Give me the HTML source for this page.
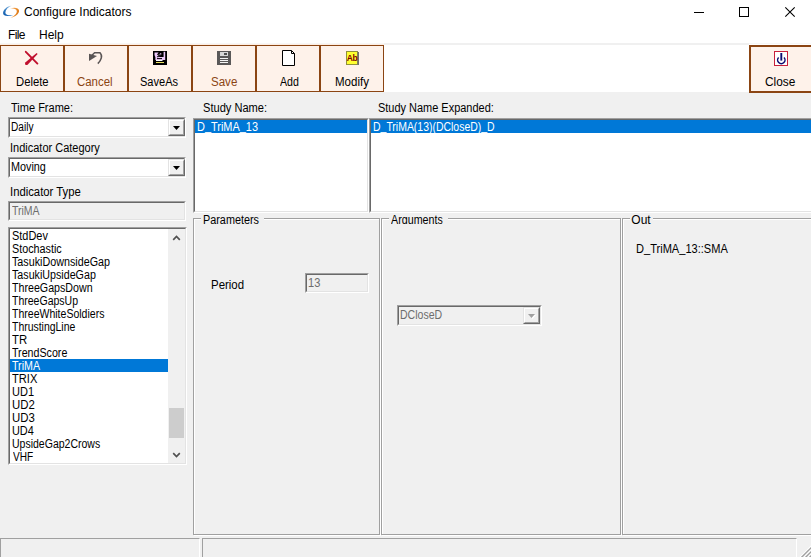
<!DOCTYPE html>
<html><head><meta charset="utf-8"><title>Configure Indicators</title>
<style>
*{box-sizing:border-box;margin:0;padding:0}
html,body{width:811px;height:557px;overflow:hidden;background:#f0f0f0}
body{position:relative;font-family:"Liberation Sans",sans-serif;font-size:11px;color:#000}
.abs{position:absolute}
.x{position:absolute;white-space:nowrap;font-size:12px;line-height:13px;height:13px;transform-origin:0 0}
.u{position:relative;top:-1px}
.t{position:absolute;white-space:nowrap;line-height:13px;height:13px}
#titlebar{left:0;top:0;width:811px;height:45px;background:#fff}
#title{left:24px;top:5px;font-size:12px;line-height:14px;height:16px}
.menu{font-size:12px;line-height:14px;height:16px;top:28px}
#tbbg{left:0;top:45px;width:811px;height:47px;background:#fff}
.tb{position:absolute;top:45px;width:64px;height:47px;border:1px solid #8b4513;background:#fef2ea}
.brown{color:#8b4513}
.sunk{position:absolute;border:1px solid #a0a0a0;border-right-color:#fff;border-bottom-color:#fff}
.sunk>.in{position:absolute;left:0;top:0;right:0;bottom:0;border:1px solid #696969;border-right-color:#e3e3e3;border-bottom-color:#e3e3e3}
.white{background:#fff}
.cbtn{position:absolute;width:17px;height:17px;background:#f0f0f0;border:1px solid #e3e3e3;border-right-color:#696969;border-bottom-color:#696969}
.cbtn>i{position:absolute;left:0;top:0;right:0;bottom:0;border:1px solid #fff;border-right-color:#a0a0a0;border-bottom-color:#a0a0a0}
.gb{position:absolute;border:1px solid #a0a0a0;box-shadow:1px 1px 0 #fff, inset 1px 1px 0 #fff}
.cap{position:absolute;background:#f0f0f0;line-height:13px;height:13px;white-space:nowrap;overflow:hidden}
.sel{position:absolute;background:#0078d7;color:#fff;white-space:nowrap;line-height:13px;height:13px;overflow:hidden}
.dis{color:#6d6d6d}
</style></head><body>

<div class="abs" id="titlebar"></div>
<svg class="abs" style="left:0;top:0" width="24" height="24" viewBox="0 0 24 24">
 <defs>
  <linearGradient id="gb" x1="0.8" y1="0" x2="0.1" y2="0.9"><stop offset="0" stop-color="#b8d4ec"/><stop offset="0.5" stop-color="#3f86c8"/><stop offset="1" stop-color="#0f5cae"/></linearGradient>
  <linearGradient id="go" x1="0" y1="0.2" x2="1" y2="0.6"><stop offset="0" stop-color="#f8c890"/><stop offset="0.5" stop-color="#ee9436"/><stop offset="1" stop-color="#d8730f"/></linearGradient>
 </defs>
 <path d="M11.8 5.6C7 6.3 2.9 10 3.1 13.3C3.3 16 6.8 16.9 13.2 15.2C9 15.5 5.3 15 5.4 12.5C5.5 10 8 7.2 11.8 5.6Z" fill="url(#gb)"/>
 <path d="M9.6 8.7C14 7 18.5 7.5 19 10.6C19.4 13.6 15.5 17.1 10 17.9C13.5 16.6 16.9 13.8 16.8 11.2C16.7 8.8 13.5 8 9.6 8.7Z" fill="url(#go)"/>
</svg>
<div class="t" id="title">Configure Indicators</div>
<svg class="abs" style="left:680px;top:0" width="131" height="24" viewBox="0 0 131 24">
 <path d="M14 12.5H24" stroke="#000" stroke-width="1" fill="none"/>
 <rect x="59.5" y="7.5" width="9" height="9" stroke="#000" stroke-width="1" fill="none"/>
 <path d="M105.3 7.3L114.7 16.7M114.7 7.3L105.3 16.7" stroke="#000" stroke-width="1.1" fill="none"/>
</svg>
<div class="t menu" style="left:8px;letter-spacing:-0.6px">File</div>
<div class="t menu" style="left:39px">Help</div>

<div class="abs" id="tbbg"></div>
<div class="abs" style="left:0;top:43px;width:384px;height:1px;background:#f7f7f7"></div>
<div class="abs" style="left:0;top:44px;width:384px;height:1px;background:#fdeee3"></div>
<div class="abs" style="left:384px;top:43px;width:365px;height:2px;background:#f0f0f0"></div>
<div class="abs" style="left:749px;top:43px;width:62px;height:1px;background:#f7f7f7"></div>
<div class="tb" style="left:0"></div>
<div class="tb" style="left:64px"></div>
<div class="tb" style="left:128px"></div>
<div class="tb" style="left:192px"></div>
<div class="tb" style="left:256px"></div>
<div class="tb" style="left:320px"></div>
<div class="tb" style="left:749px;width:64px;border-width:2px;top:45px;height:48px"></div>

<div class="x" style="left:15.76px;top:76px;transform:scaleX(0.9394);">Delete</div>
<div class="x" style="left:77.35px;top:76px;transform:scaleX(0.9528);color:#8b4513;">Cancel</div>
<div class="x" style="left:140.48px;top:76px;transform:scaleX(0.9200);">SaveAs</div>
<div class="x" style="left:211.04px;top:76px;transform:scaleX(0.9615);color:#8b4513;">Save</div>
<div class="x" style="left:279.60px;top:76px;transform:scaleX(0.8810);">Add</div>
<div class="x" style="left:335.44px;top:76px;transform:scaleX(0.9588);">Modify</div>
<div class="x" style="left:765.11px;top:76px;transform:scaleX(0.9897);">Close</div>
<!-- toolbar icons (absolute page coords) -->
<svg class="abs" style="left:0;top:45px" width="811" height="30" viewBox="0 45 811 30">
 <!-- delete -->
 <path d="M25.8 51.8L37.4 63.6" stroke="#c0102e" stroke-width="1.9" stroke-linecap="round"/>
 <path d="M36.6 53L37.6 54L27.6 64.8Q26.2 65.4 25.2 64.4Q24.6 63.2 25.6 62.2Z" fill="#c0102e"/>
 <!-- cancel/undo -->
 <path d="M89 53.8V61L97 56Z" fill="#5a5555"/>
 <path d="M91.5 55.8L94.6 52.8H100Q102.2 55.2 101.3 58Q100.4 61.2 97.8 63.6" stroke="#5a5555" stroke-width="1.5" fill="none"/>
 <!-- saveas -->
 <rect x="153" y="51" width="14" height="14" fill="#000"/>
 <path d="M154.5 52.5H158.6L157 54.4L158 55.2L160.8 53L161.6 54L158.4 57H163.6V51.8H165.2V60H155.4V57.2L154.5 55Z" fill="#ecc8f8"/>
 <path d="M160.4 54.4L157.4 57" stroke="#000" stroke-width="1.1"/>
 <path d="M157 58.6H162" stroke="#000" stroke-width="1"/>
 <rect x="156" y="60" width="6.5" height="1" fill="#fff"/>
 <rect x="156" y="62" width="8" height="1" fill="#e8e060"/>
 <!-- save -->
 <rect x="217" y="51" width="14" height="14" fill="#5a5858"/>
 <rect x="220" y="52" width="8" height="4" fill="#d8d8d8"/>
 <rect x="224" y="53" width="3" height="2" fill="#505050"/>
 <rect x="220" y="58" width="8" height="1" fill="#f4f4f4"/>
 <rect x="220" y="60" width="8" height="1" fill="#f4f4f4"/>
 <rect x="220" y="62" width="8" height="1" fill="#f4f4f4"/>
 <!-- add -->
 <path d="M282.5 50.5H291.5L294.5 53.5V65.5H282.5Z" fill="#fff" stroke="#000" stroke-width="1"/>
 <path d="M291.5 50.5V53.5H294.5" fill="none" stroke="#000" stroke-width="1"/>
 <!-- modify -->
 <rect x="346.5" y="51.5" width="11" height="13" fill="#ffff30" stroke="#90903c" stroke-width="1"/>
 <rect x="357.5" y="52" width="1.5" height="13" fill="#707070"/>
 <text x="352" y="60.6" font-family="Liberation Sans,sans-serif" font-size="8.5" font-weight="bold" fill="#800000" text-anchor="middle" letter-spacing="-0.4">Ab</text>
 <!-- close -->
 <rect x="774.5" y="51.5" width="13" height="14" fill="#fff" stroke="#c8203c" stroke-width="1"/>
 <path d="M778.6 57.4A3.7 3.7 0 1 0 784 57.4" stroke="#0c0c70" stroke-width="1.5" fill="none"/>
 <path d="M781.3 53V60.6" stroke="#0c0c70" stroke-width="1.9"/>
</svg>

<!-- left panel -->
<div class="x" style="left:10.50px;top:102px;transform:scaleX(0.9179);">Time Frame:</div>
<div class="sunk white" style="left:8px;top:117px;width:178px;height:21px"><div class="in"></div></div>
<div class="x" style="left:10.86px;top:121px;transform:scaleX(0.8423);">Daily</div>
<div class="cbtn" style="left:168px;top:119px"><i></i></div>
<svg class="abs" style="left:173px;top:126px" width="7" height="4" viewBox="0 0 7 4"><path d="M0 0H7L3.5 4Z" fill="#000"/></svg>

<div class="x" style="left:10.18px;top:142px;transform:scaleX(0.9165);">Indicator Category</div>
<div class="sunk white" style="left:8px;top:157px;width:178px;height:21px"><div class="in"></div></div>
<div class="x" style="left:10.80px;top:161px;transform:scaleX(0.9000);">Moving</div>
<div class="cbtn" style="left:168px;top:159px"><i></i></div>
<svg class="abs" style="left:173px;top:166px" width="7" height="4" viewBox="0 0 7 4"><path d="M0 0H7L3.5 4Z" fill="#000"/></svg>

<div class="x" style="left:10.16px;top:186px;transform:scaleX(0.9419);">Indicator Type</div>
<div class="sunk" style="left:8px;top:201px;width:178px;height:20px"><div class="in"></div></div>
<div class="x" style="left:11.70px;top:205px;transform:scaleX(0.8742);color:#6d6d6d;">TriMA</div>

<div class="sunk white" style="left:8px;top:227px;width:179px;height:238px"><div class="in"></div></div>
<div class="x" style="left:11.59px;top:230px;transform:scaleX(0.9132);">StdDev</div>
<div class="x" style="left:11.60px;top:243px;transform:scaleX(0.8981);">Stochastic</div>
<div class="x" style="left:12.20px;top:256px;transform:scaleX(0.8954);">TasukiDownsideGap</div>
<div class="x" style="left:12.20px;top:269px;transform:scaleX(0.8915);">TasukiUpsideGap</div>
<div class="x" style="left:12.20px;top:282px;transform:scaleX(0.8889);">ThreeGapsDown</div>
<div class="x" style="left:12.20px;top:295px;transform:scaleX(0.8760);">ThreeGapsUp</div>
<div class="x" style="left:12.20px;top:308px;transform:scaleX(0.8771);">ThreeWhiteSoldiers</div>
<div class="x" style="left:12.20px;top:321px;transform:scaleX(0.8708);">ThrustingLine</div>
<div class="x" style="left:12.20px;top:334px;transform:scaleX(0.9467);">TR</div>
<div class="x" style="left:12.20px;top:347px;transform:scaleX(0.8887);">TrendScore</div>
<div class="sel" style="left:10px;top:359px;width:158px"></div>
<div class="x" style="left:12.20px;top:360px;transform:scaleX(0.8871);color:#fff;">TriMA</div>
<div class="x" style="left:12.20px;top:373px;transform:scaleX(0.9259);">TRIX</div>
<div class="x" style="left:11.58px;top:386px;transform:scaleX(0.9182);">UD1</div>
<div class="x" style="left:11.55px;top:399px;transform:scaleX(0.9500);">UD2</div>
<div class="x" style="left:11.55px;top:412px;transform:scaleX(0.9500);">UD3</div>
<div class="x" style="left:11.59px;top:425px;transform:scaleX(0.9087);">UD4</div>
<div class="x" style="left:11.62px;top:438px;transform:scaleX(0.8758);">UpsideGap2Crows</div>
<div class="x" style="left:12.50px;top:451px;transform:scaleX(0.8417);">VHF</div>
<div class="abs" style="left:168px;top:229px;width:17px;height:234px;background:#f0f0f0"></div>
<svg class="abs" style="left:172px;top:234px" width="9" height="8" viewBox="0 0 9 8"><path d="M1.2 5.8L4.5 2.5L7.8 5.8" stroke="#505050" stroke-width="1.7" fill="none"/></svg>
<svg class="abs" style="left:172px;top:451px" width="9" height="8" viewBox="0 0 9 8"><path d="M1.2 2.2L4.5 5.5L7.8 2.2" stroke="#505050" stroke-width="1.7" fill="none"/></svg>
<div class="abs" style="left:169px;top:408px;width:15px;height:30px;background:#cdcdcd"></div>

<!-- study lists -->
<div class="x" style="left:202.78px;top:102px;transform:scaleX(0.9239);">Study Name:</div>
<div class="sunk white" style="left:193px;top:118px;width:176px;height:95px"><div class="in"></div></div>
<div class="sel" style="left:195px;top:120px;width:172px"></div><div class="x" style="left:196.89px;top:121px;transform:scaleX(0.9108);color:#fff;">D<span class="u">_</span>TriMA<span class="u">_</span>13</div>
<div class="x" style="left:378.39px;top:102px;transform:scaleX(0.9136);">Study Name Expanded:</div>
<div class="sunk white" style="left:369px;top:118px;width:460px;height:95px"><div class="in"></div></div>
<div class="sel" style="left:371px;top:120px;width:456px"></div><div class="x" style="left:372.93px;top:121px;transform:scaleX(0.8710);color:#fff;">D<span class="u">_</span>TriMA(13)(DCloseD)<span class="u">_</span>D</div>

<!-- group boxes -->
<div class="gb" style="left:193px;top:218px;width:187px;height:317px"></div>
<div class="cap" style="left:201px;top:214px;width:63px"></div><div class="x" style="left:203.00px;top:214px;transform:scaleX(0.9033);">Parameters</div>
<div class="x" style="left:210.75px;top:279px;transform:scaleX(0.9545);">Period</div>
<div class="sunk" style="left:305px;top:273px;width:64px;height:20px"><div class="in"></div></div>
<div class="x" style="left:308.18px;top:277px;transform:scaleX(0.9250);color:#6d6d6d;">13</div>

<div class="gb" style="left:381px;top:218px;width:240px;height:317px"></div>
<div class="cap" style="left:389px;top:214px;width:59px"></div><div class="x" style="left:391.40px;top:214px;transform:scaleX(0.8931);height:10px;overflow:hidden;">Arguments</div>
<div class="sunk" style="left:397px;top:305px;width:145px;height:21px"><div class="in"></div></div>
<div class="x" style="left:399.92px;top:309px;transform:scaleX(0.8783);color:#6d6d6d;">DCloseD</div>
<div class="cbtn" style="left:523px;top:307px"><i></i></div>
<svg class="abs" style="left:528px;top:314px" width="9" height="6" viewBox="0 0 9 6"><path d="M1 1H8L4.5 5Z" fill="#fff"/><path d="M0 0H7L3.5 4Z" fill="#a0a0a0"/></svg>

<div class="gb" style="left:622px;top:218px;width:240px;height:317px"></div>
<div class="cap" style="left:630px;top:214px;width:23px"></div><div class="x" style="left:631.30px;top:214px;transform:scaleX(1.0000);">Out</div>
<div class="x" style="left:635.78px;top:243px;transform:scaleX(0.9214);">D<span class="u">_</span>TriMA<span class="u">_</span>13::SMA</div>

<!-- status bar -->
<div class="abs" style="left:0;top:538px;width:200px;height:20px;border:1px solid #a0a0a0;border-right-color:#fff;border-bottom-color:#fff"></div>
<div class="abs" style="left:202px;top:538px;width:595px;height:20px;border:1px solid #a0a0a0;border-right-color:#fff;border-bottom-color:#fff"></div>
<svg class="abs" style="left:798px;top:544px" width="13" height="13" viewBox="0 0 13 13">
 <path d="M1.6 13L13 1.6V2.9L2.9 13Z" fill="#fff"/>
 <path d="M2.9 13L13 2.9V4.8L4.8 13Z" fill="#a0a0a0"/>
 <path d="M5.6 13L13 5.6V6.9L6.9 13Z" fill="#fff"/>
 <path d="M6.9 13L13 6.9V8.8L8.8 13Z" fill="#a0a0a0"/>
 <path d="M9.6 13L13 9.6V10.9L10.9 13Z" fill="#fff"/>
 <path d="M10.9 13L13 10.9V12.8L12.8 13Z" fill="#a0a0a0"/>
</svg>

</body></html>
